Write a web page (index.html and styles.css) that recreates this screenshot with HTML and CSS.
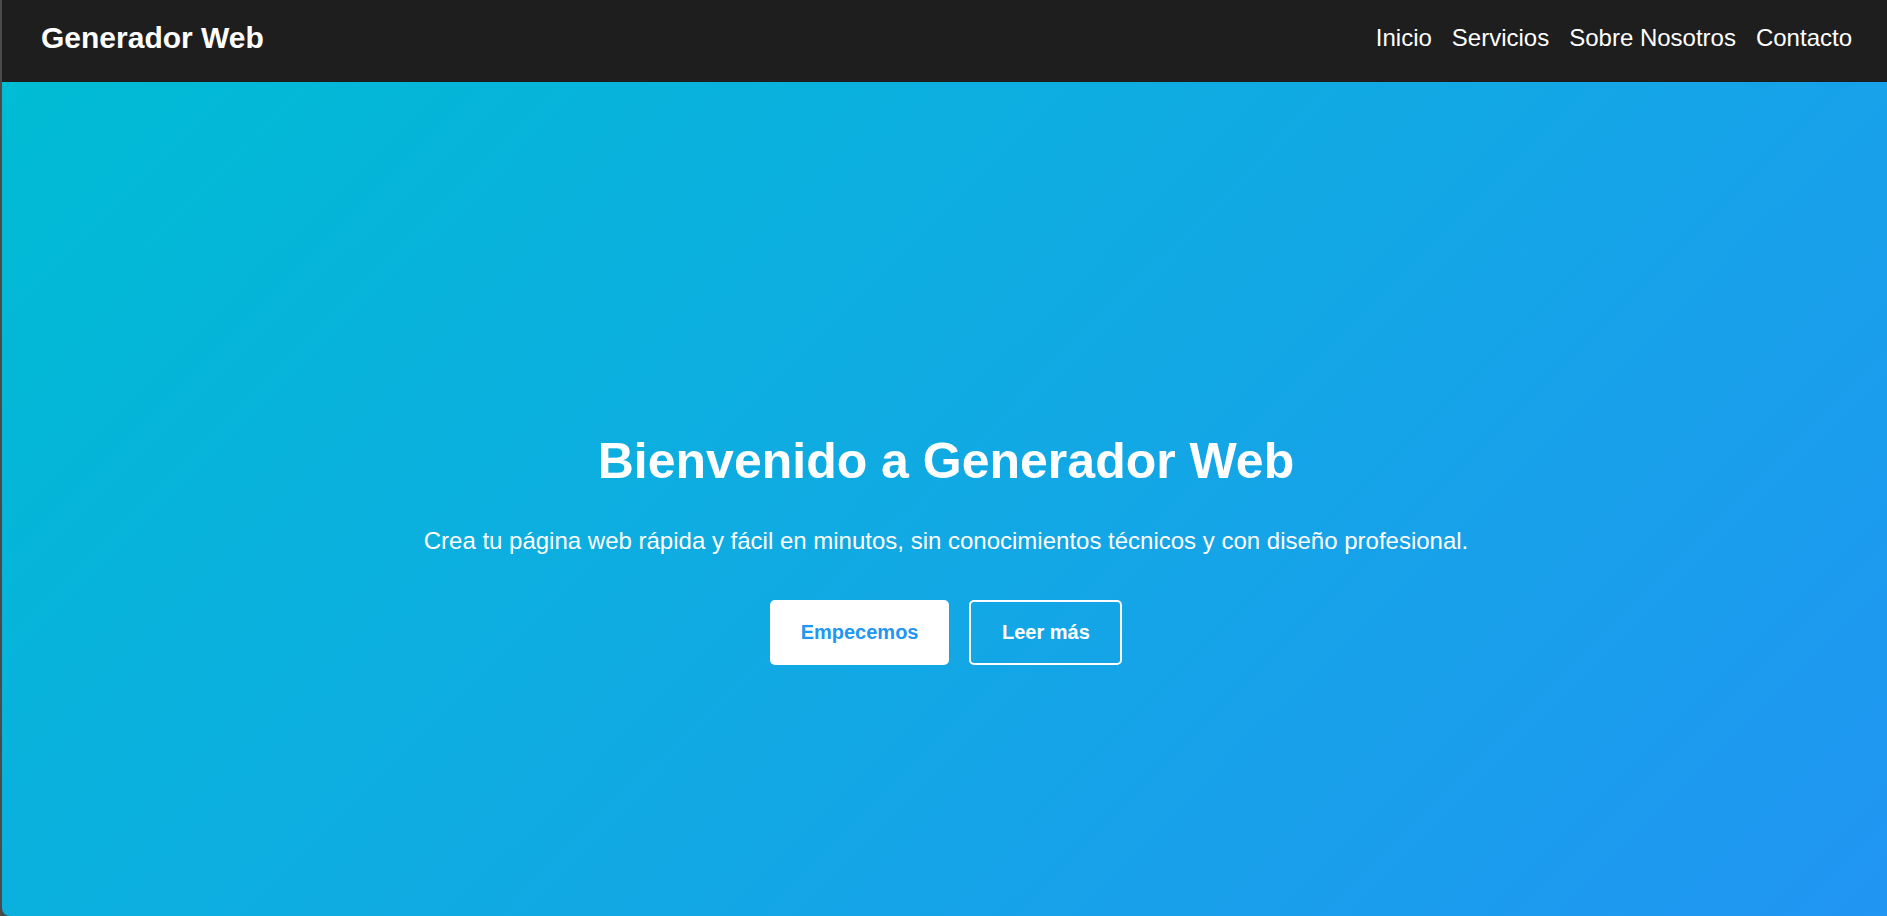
FILE: index.html
```html
<!DOCTYPE html>
<html lang="es">
<head>
<meta charset="utf-8">
<title>Generador Web</title>
<link rel="stylesheet" href="styles.css">
</head>
<body>
<div class="window">
  <header class="topbar">
    <div class="logo">Generador Web</div>
    <nav class="nav">
      <a href="#">Inicio</a>
      <a href="#">Servicios</a>
      <a href="#">Sobre Nosotros</a>
      <a href="#">Contacto</a>
    </nav>
  </header>
  <section class="hero">
    <div class="hero-content">
      <h1 class="hero-title">Bienvenido a Generador Web</h1>
      <p class="hero-text">Crea tu página web rápida y fácil en minutos, sin conocimientos técnicos y con diseño profesional.</p>
      <div class="hero-actions">
        <a href="#" class="btn btn-primary">Empecemos</a>
        <a href="#" class="btn btn-outline">Leer más</a>
      </div>
    </div>
  </section>
</div>
</body>
</html>
```
FILE: styles.css
```css
* { box-sizing: border-box; }
html, body { margin: 0; padding: 0; height: 100%; }
body {
  background: #4b4b4b;
  font-family: "Liberation Sans", Arial, sans-serif;
  overflow: hidden;
}
.window {
  margin-left: 2px;
  height: 916px;
  display: flex;
  flex-direction: column;
  border-bottom-left-radius: 8px;
  overflow: hidden;
}
.topbar {
  height: 82px;
  flex: 0 0 82px;
  background: #1e1e1e;
  display: flex;
  align-items: center;
  justify-content: space-between;
  padding: 0 35px 7px 39px;
}
.logo {
  color: #fff;
  font-weight: 700;
  font-size: 30px;
}
.nav {
  display: flex;
  gap: 20px;
}
.nav a {
  color: #fff;
  text-decoration: none;
  font-size: 24px;
}
.hero {
  flex: 1;
  background: linear-gradient(135deg, #00bcd4, #2196f3);
  display: flex;
  align-items: center;
  justify-content: center;
  padding-top: 99px;
  padding-left: 3px;
  color: #fff;
  text-align: center;
}
.hero-title {
  margin: 0 0 37px;
  font-size: 50px;
  font-weight: 700;
  line-height: 57px;
}
.hero-text {
  margin: 0 0 45px;
  font-size: 24px;
  line-height: 28px;
}
.hero-actions {
  display: flex;
  justify-content: center;
  gap: 20px;
}
.btn {
  height: 65px;
  display: inline-flex;
  align-items: center;
  justify-content: center;
  font-size: 20px;
  font-weight: 700;
  text-decoration: none;
  border-radius: 5px;
}
.btn-primary {
  background: #fff;
  color: #2196f3;
  padding: 0 31px;
}
.btn-outline {
  color: #fff;
  border: 2px solid #fff;
  padding: 0 30.5px;
}
```
